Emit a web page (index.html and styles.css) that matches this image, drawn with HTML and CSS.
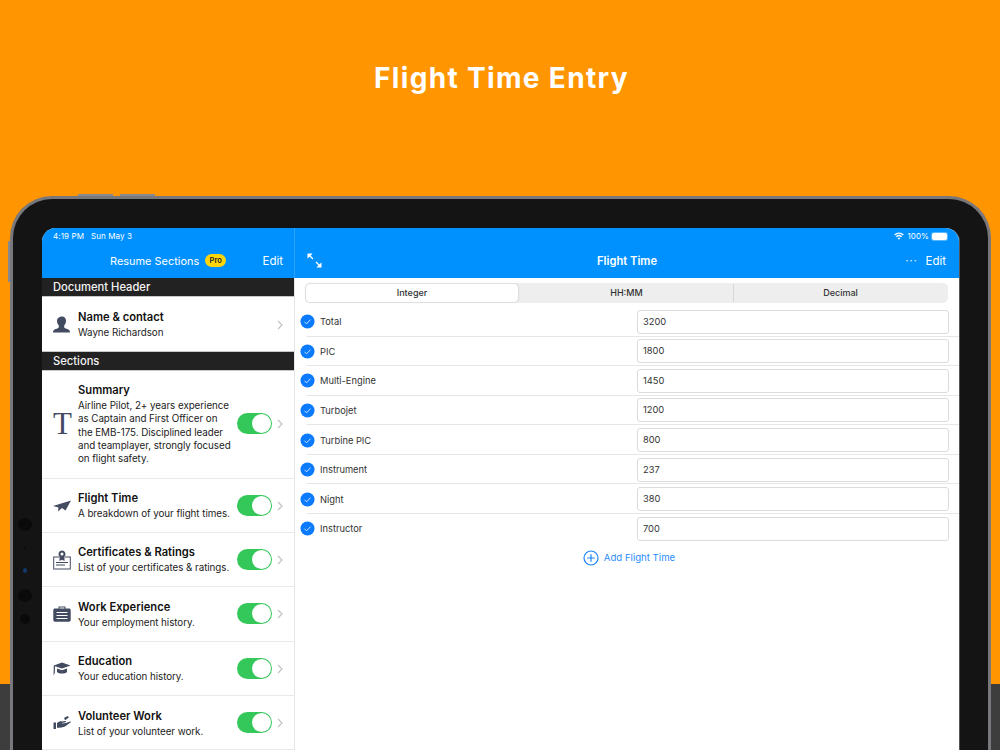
FILE: index.html
```html
<!DOCTYPE html>
<html lang="en">
<head>
<meta charset="utf-8">
<title>Flight Time Entry</title>
<link rel="stylesheet" href="styles.css">
</head>
<body>
<h1 class="headline">Flight Time Entry</h1>
<div class="device">
  <span class="hw hw-top hw-top-a"></span><span class="hw hw-top hw-top-b"></span><span class="hw hw-side"></span>
  <span class="cam cam-a"></span><span class="cam cam-b"></span><span class="cam cam-c"></span><span class="cam cam-d"></span><span class="cam cam-e"></span>
  <div class="screen">
    <aside class="master">
      <header class="bar master-bar">
        <div class="status"><span>4:19 PM</span><span>Sun May 3</span></div>
        <div class="nav">
          <span class="nav-title">Resume Sections</span><span class="pro">Pro</span><span class="nav-edit">Edit</span>
        </div>
      </header>
      <div class="band">Document Header</div>
      <div class="cell cell-contact">
        <svg class="ico" viewBox="0 0 18 18"><path d="M9 .5c2.500 0 4 1.800 4 4.300 0 2-.8 3.700-1.800 4.700v1.700c0 .9 1.600 1.200 3.200 1.900 1.500.6 2.600 1.300 2.600 3.400H0c0-2.100 1.100-2.800 2.600-3.400 1.600-.7 3.200-1 3.200-1.900V9.500C4.800 8.500 4 6.800 4 4.800 4 2.300 6.500.5 9 .5z"/></svg>
        <div class="cell-text"><b>Name &amp; contact</b><span>Wayne Richardson</span></div>
        <svg class="chev" viewBox="0 0 6 10"><path d="M1 1l4 4-4 4"/></svg>
      </div>
      <div class="band">Sections</div>
      <div class="cell cell-summary">
        <span class="ico ico-t">T</span>
        <div class="cell-text"><b>Summary</b><span>Airline Pilot, 2+ years experience as Captain and First Officer on the EMB-175. Disciplined leader and teamplayer, strongly focused on flight safety.</span></div>
        <span class="toggle"></span>
        <svg class="chev" viewBox="0 0 6 10"><path d="M1 1l4 4-4 4"/></svg>
      </div>
      <div class="cell">
        <svg class="ico" viewBox="0 0 18 18"><path d="M0 9L18 3.500 12.500 13.500 9 11 5 14.500 5.500 10.500z"/></svg>
        <div class="cell-text"><b>Flight Time</b><span>A breakdown of your flight times.</span></div>
        <span class="toggle"></span>
        <svg class="chev" viewBox="0 0 6 10"><path d="M1 1l4 4-4 4"/></svg>
      </div>
      <div class="cell">
        <svg class="ico ico-cert" viewBox="0 0 18 20"><path fill-rule="evenodd" d="M6 6.500H.2V19.500h17.600V6.500H12v1h4.800v11H1.200v-11H6zM3 12h12v1H3zm0 2.500h9v1H3zM9 .5a3.600 3.600 0 0 1 2.500 6.100V11L9 9.800 6.500 11V6.600A3.600 3.600 0 0 1 9 .5zm0 2a1.500 1.500 0 1 0 0 3.100A1.500 1.500 0 0 0 9 2.500z"/></svg>
        <div class="cell-text"><b>Certificates &amp; Ratings</b><span>List of your certificates &amp; ratings.</span></div>
        <span class="toggle"></span>
        <svg class="chev" viewBox="0 0 6 10"><path d="M1 1l4 4-4 4"/></svg>
      </div>
      <div class="cell">
        <svg class="ico" viewBox="0 0 18 18"><path fill-rule="evenodd" d="M5.500 3.500V1.500h7v2h-1V2.500h-5v1zM2 3.500h14c1 0 1.700.7 1.700 1.700V15c0 1-.7 1.700-1.700 1.700H2C1 16.700.3 16 .3 15V5.200C.3 4.200 1 3.500 2 3.500zM3.500 7v1h11V7zm0 3v1h11v-1zm0 3v1h11v-1z"/></svg>
        <div class="cell-text"><b>Work Experience</b><span>Your employment history.</span></div>
        <span class="toggle"></span>
        <svg class="chev" viewBox="0 0 6 10"><path d="M1 1l4 4-4 4"/></svg>
      </div>
      <div class="cell">
        <svg class="ico" viewBox="0 0 18 18"><path d="M9 2.500L17.500 5.500 9 8.500 2 6.200 1.800 13 .5 15.500.8 5.500zM4 8.500l5 1.700 5-1.700v3.500c-1 1-3 1.500-5 1.500s-4-.5-5-1.500z"/></svg>
        <div class="cell-text"><b>Education</b><span>Your education history.</span></div>
        <span class="toggle"></span>
        <svg class="chev" viewBox="0 0 6 10"><path d="M1 1l4 4-4 4"/></svg>
      </div>
      <div class="cell">
        <svg class="ico" viewBox="0 0 18 18"><path d="M.5 8.500H3v6.500H.5zM4 9c2-1.500 3.500-2 5-1.500l3.500-.5c.7 0 .7 1.200 0 1.300L9 9v.5l4-.5 4-1.500c.8-.2 1 .6.500 1.100L12 12.500c-2 1-5 1.200-8 1.300zM11.500 3.500L15 2l.8 1.500-3.300 2.500c-.8.400-1.600-2-1-2.500z"/></svg>
        <div class="cell-text"><b>Volunteer Work</b><span>List of your volunteer work.</span></div>
        <span class="toggle"></span>
        <svg class="chev" viewBox="0 0 6 10"><path d="M1 1l4 4-4 4"/></svg>
      </div>
    </aside>
    <main class="detail">
      <header class="bar detail-bar">
        <div class="status status-right">
          <svg class="wifi" viewBox="0 0 12 9"><path d="M6 9L4.300 7a2.500 2.500 0 0 1 3.400 0zM3.400 6L2.300 4.800a5.500 5.500 0 0 1 7.400 0L8.600 6a4 4 0 0 0-5.200 0zM1.400 3.800L.2 2.600a8.500 8.500 0 0 1 11.600 0l-1.200 1.200a7 7 0 0 0-9.200 0z"/></svg>
          <span>100%</span>
          <span class="battery"></span>
        </div>
        <div class="nav detail-nav">
          <svg class="expand" viewBox="0 0 15 15"><path class="expand-line" d="M2 2l4 4M9 9l4 4"/><path d="M.5.500h5L4.300 2 2 4.300.5 5.500zM14.500 14.500h-5L10.700 13 13 10.700l1.500-1.200z"/></svg>
          <span class="detail-title">Flight Time</span>
          <span class="more">···</span>
          <span class="nav-edit">Edit</span>
        </div>
      </header>
      <div class="segments">
        <span class="seg seg-on">Integer</span>
        <span class="seg seg-mid">HH:MM</span>
        <span class="seg seg-divided">Decimal</span>
      </div>
      <ul class="rows">
        <li class="row"><svg class="check" viewBox="0 0 16 16"><circle cx="8" cy="8" r="7.500"/><path d="M4.800 8.300l2.200 2.200 4.200-4.500"/></svg><span class="row-label">Total</span><span class="field">3200</span></li>
        <li class="row"><svg class="check" viewBox="0 0 16 16"><circle cx="8" cy="8" r="7.500"/><path d="M4.800 8.300l2.200 2.200 4.200-4.500"/></svg><span class="row-label">PIC</span><span class="field">1800</span></li>
        <li class="row"><svg class="check" viewBox="0 0 16 16"><circle cx="8" cy="8" r="7.500"/><path d="M4.800 8.300l2.200 2.200 4.200-4.500"/></svg><span class="row-label">Multi-Engine</span><span class="field">1450</span></li>
        <li class="row"><svg class="check" viewBox="0 0 16 16"><circle cx="8" cy="8" r="7.500"/><path d="M4.800 8.300l2.200 2.200 4.200-4.500"/></svg><span class="row-label">Turbojet</span><span class="field">1200</span></li>
        <li class="row"><svg class="check" viewBox="0 0 16 16"><circle cx="8" cy="8" r="7.500"/><path d="M4.800 8.300l2.200 2.200 4.200-4.500"/></svg><span class="row-label">Turbine PIC</span><span class="field">800</span></li>
        <li class="row"><svg class="check" viewBox="0 0 16 16"><circle cx="8" cy="8" r="7.500"/><path d="M4.800 8.300l2.200 2.200 4.200-4.500"/></svg><span class="row-label">Instrument</span><span class="field">237</span></li>
        <li class="row"><svg class="check" viewBox="0 0 16 16"><circle cx="8" cy="8" r="7.500"/><path d="M4.800 8.300l2.200 2.200 4.200-4.500"/></svg><span class="row-label">Night</span><span class="field">380</span></li>
        <li class="row"><svg class="check" viewBox="0 0 16 16"><circle cx="8" cy="8" r="7.500"/><path d="M4.800 8.300l2.200 2.200 4.200-4.500"/></svg><span class="row-label">Instructor</span><span class="field">700</span></li>
      </ul>
      <div class="add">
        <svg class="add-ico" viewBox="0 0 16 16"><circle cx="8" cy="8" r="7"/><path d="M8 4.200v7.600M4.200 8h7.600"/></svg>
        <span>Add Flight Time</span>
      </div>
    </main>
  </div>
</div>
</body>
</html>
```
FILE: styles.css
```css
* { box-sizing: border-box; }
html, body { margin: 0; height: 750px; overflow: hidden; }
body {
  width: 1000px;
  font-family: Inter, "Liberation Sans", sans-serif;
  background: linear-gradient(#ff9500 684px, #3d3d3d 684px);
}
.headline {
  margin: 0;
  height: 196px;
  padding: 60px 0 0 3px;
  text-align: center;
  color: #fff;
  font-size: 28px;
  line-height: 36px;
  font-weight: 700;
  letter-spacing: 1.330px;
}
.device {
  position: relative;
  width: 981px;
  height: 554px;
  margin-left: 10px;
  padding: 29px 0 0 29px;
  background: #141414;
  border: 3px solid #77777c;
  border-bottom: 0;
  border-radius: 42px 42px 0 0;
}
.hw { position: absolute; background: #8a8a8e; }
.hw-top { top: -5px; height: 2px; width: 35px; }
.hw-top-a { left: 65px; }
.hw-top-b { left: 107px; }
.hw-side { left: -5px; top: 42px; width: 2px; height: 41px; }
.cam { position: absolute; border-radius: 50%; background: #0a0a0a; }
.cam-a { left: 5px; top: 319px; width: 14px; height: 13px; }
.cam-b { left: 11px; top: 348px; width: 2px; height: 2px; }
.cam-c { left: 10px; top: 369px; width: 4px; height: 5px; background: #12386e; }
.cam-d { left: 5px; top: 390px; width: 14px; height: 13px; }
.cam-e { left: 7px; top: 415px; width: 10px; height: 10px; }
.screen {
  display: flex;
  width: 917px;
  height: 522px;
  background: #fff;
  border-radius: 14px 14px 0 0;
  box-shadow: 1px 0 0 #55555a;
  overflow: hidden;
}
.master { width: 253px; flex: none; border-right: 1px solid #e4e4e6; }
.detail { flex: 1; min-width: 0; }
.bar { height: 50px; background: #0091ff; color: #fff; }
.master-bar { box-shadow: 1px 0 0 #2ea2fb; }
.status {
  display: flex;
  gap: 7px;
  height: 16px;
  padding: 3px 0 0 11px;
  font-size: 8px;
  line-height: 10px;
  letter-spacing: .1px;
}
.status-right { justify-content: flex-end; align-items: center; gap: 3px; padding: 0 12px 0 0; }
.wifi { width: 10px; height: 8px; fill: #fff; }
.battery {
  width: 15px;
  height: 7px;
  background: #fff;
  border-radius: 2px;
  box-shadow: 0 0 0 1px rgba(255,255,255,.35);
}
.nav { display: flex; align-items: center; height: 34px; font-size: 10.950px; padding-bottom: 1px; }
.nav-title { margin-left: 68px; }
.pro {
  margin-left: 6px;
  width: 21px;
  height: 13px;
  border-radius: 7px;
  background: #ffd60a;
  color: #222;
  font-size: 7.500px;
  font-weight: 600;
  line-height: 13px;
  text-align: center;
}
.nav-edit { margin-left: auto; margin-right: 11px; font-size: 11.500px; }
.band {
  height: 19px;
  padding-left: 11px;
  background: #222;
  color: #f4f4f4;
  font-size: 11.200px;
  font-weight: 500;
  line-height: 18px;
  border-bottom: 1px solid #c8c8ca;
}
.cell {
  display: flex;
  align-items: center;
  height: 54.400px;
  padding: 1px 11px 0;
  border-bottom: 1px solid #e9e9eb;
}
.cell-contact { border-bottom: 1px solid #c8c8ca; height: 55px; }
.cell-summary { height: 107.500px; padding-top: 0; }
.ico { flex: none; width: 18px; height: 18px; margin-right: 7px; fill: #434b61; }
.ico-cert { height: 20px; margin-top: -1px; }
.ico-t { font-family: "Liberation Serif", serif; font-size: 31px; line-height: 18px; text-align: center; color: #434b61; }
.cell-text { flex: 1; min-width: 0; padding-right: 4px; color: #222; }
.cell-text b { display: block; font-size: 11.200px; font-weight: 600; line-height: 15px; color: #111; }
.cell-text span { display: block; font-size: 9.800px; letter-spacing: -.05px; line-height: 13.400px; margin-top: 1px; }
.toggle {
  position: relative;
  flex: none;
  width: 35px;
  height: 21px;
  margin-top: -1px;
  border-radius: 11px;
  background: #34c759;
}
.toggle::after {
  content: "";
  position: absolute;
  top: 1px;
  right: 1px;
  width: 19px;
  height: 19px;
  border-radius: 50%;
  background: #fff;
}
.chev { flex: none; width: 6px; height: 10px; margin-left: 5px; fill: none; stroke: #c4c4c7; stroke-width: 1.300; }
.detail-nav { position: relative; justify-content: flex-end; }
.expand {
  position: absolute;
  left: 12px;
  top: 9px;
  width: 15px;
  height: 15px;
  fill: #fff;
}
.expand-line { fill: none; stroke: #fff; stroke-width: 1.300; }
.detail-title {
  position: absolute;
  left: 0;
  right: 0;
  text-align: center;
  font-weight: 600;
  font-size: 11.200px;
}
.more { position: relative; font-size: 12px; letter-spacing: .6px; color: #d5ecff; margin-right: 8px; }
.detail-nav .nav-edit { position: relative; margin-left: 0; margin-right: 13px; }
.segments {
  display: flex;
  height: 20px;
  margin: 5px 11px 0 10px;
  padding: 1px;
  background: #eee;
  border-radius: 5px;
  font-size: 9px;
  font-weight: 500;
  color: #333;
}
.seg { flex: 1; text-align: center; line-height: 18px; }
.seg-on { flex: 0 0 212px; background: #fff; border-radius: 4px; box-shadow: 0 0 2px rgba(0,0,0,.25); }
.seg-mid { flex: 0 0 215px; padding-left: 2px; }
.seg-divided { border-left: 1px solid #d8d8da; }
.rows { margin: 4px 0 0; padding: 0; list-style: none; }
.row {
  position: relative;
  display: flex;
  align-items: center;
  height: 29.570px;
  padding: 0 10px 0 5px;
  font-size: 9.300px;
  color: #333;
}
.row:not(:last-child)::after {
  content: "";
  position: absolute;
  left: 12px;
  right: 0;
  bottom: 0;
  height: 1px;
  background: #e6e6e8;
}
.check { flex: none; width: 15px; height: 15px; margin-right: 5px; }
.check circle { fill: #0a7aff; }
.check path { fill: none; stroke: #d7e8ff; stroke-width: 1; }
.row-label { flex: 1; }
.field {
  flex: none;
  width: 312px;
  height: 24px;
  padding-left: 5px;
  background: #fff;
  border: 1px solid #dcdcde;
  border-radius: 3px;
  font-size: 9.300px;
  line-height: 22.500px;
}
.add {
  display: flex;
  align-items: center;
  justify-content: center;
  gap: 5px;
  height: 28px;
  padding-left: 4px;
  font-size: 9.600px;
  color: #2a8cff;
}
.add-ico { width: 16px; height: 16px; fill: none; stroke: #1c84ff; stroke-width: 1.200; }
```
